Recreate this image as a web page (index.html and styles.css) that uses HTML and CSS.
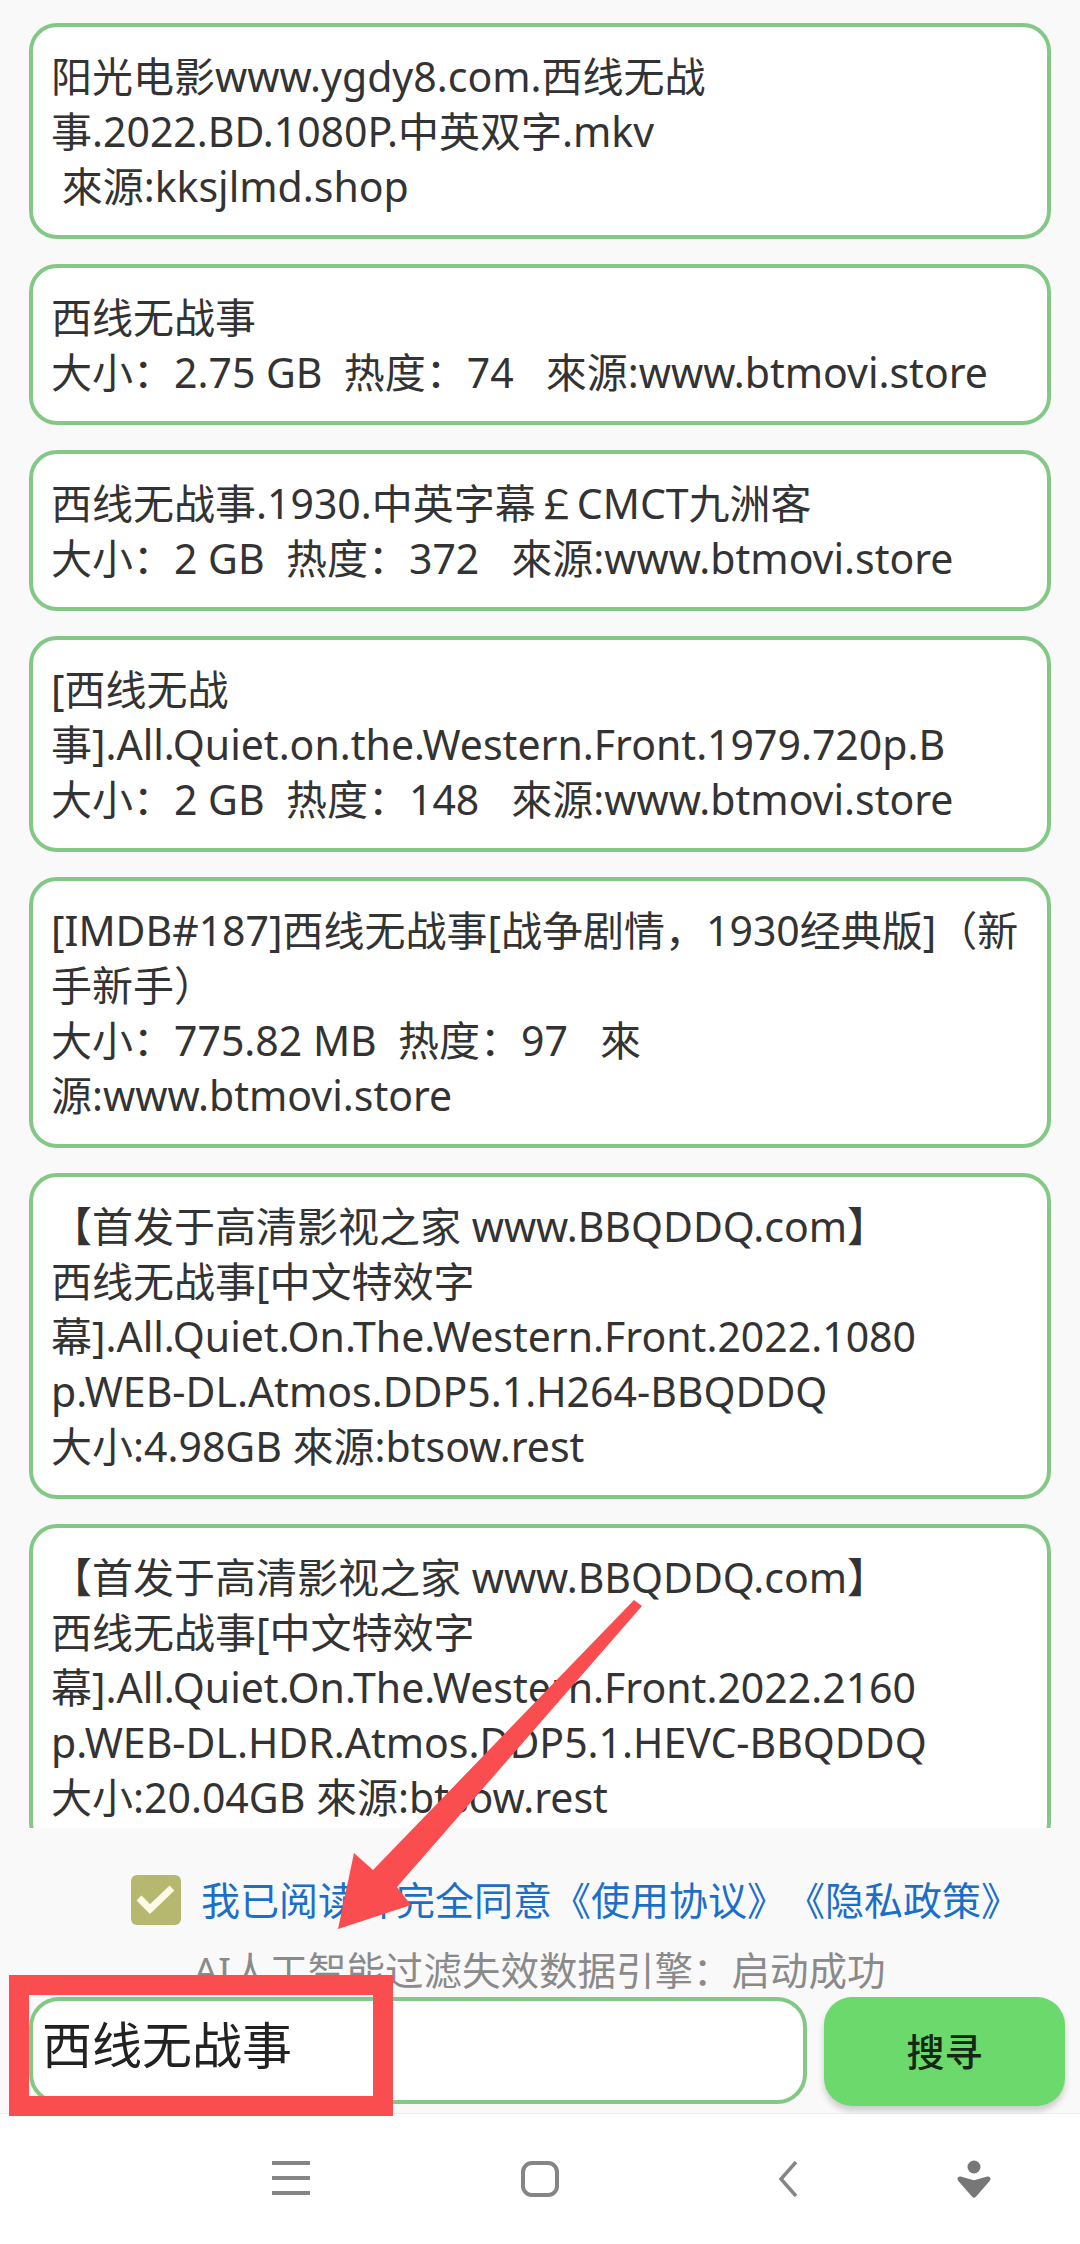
FILE: index.html
```html
<!DOCTYPE html>
<html lang="zh">
<head>
<meta charset="utf-8">
<title>西线无战事</title>
<link rel="stylesheet" href="styles.css">
</head>
<body>
<div class="screen">
  <main class="list">
    <div class="card">阳光电影www.ygdy8.com.西线无战<br>事.2022.BD.1080P.中英双字.mkv<br>&nbsp;來源:kksjlmd.shop</div>
    <div class="card">西线无战事<br>大小：2.75 GB &nbsp;热度：74 &nbsp; 來源:www.btmovi.store</div>
    <div class="card">西线无战事.1930.中英字幕￡CMCT九洲客<br>大小：2 GB &nbsp;热度：372 &nbsp; 來源:www.btmovi.store</div>
    <div class="card">[西线无战<br>事].All.Quiet.on.the.Western.Front.1979.720p.B<br>大小：2 GB &nbsp;热度：148 &nbsp; 來源:www.btmovi.store</div>
    <div class="card">[IMDB#187]西线无战事[战争剧情，1930经典版]（新<br>手新手）<br>大小：775.82 MB &nbsp;热度：97 &nbsp; 來<br>源:www.btmovi.store</div>
    <div class="card">【首发于高清影视之家 www.BBQDDQ.com】<br>西线无战事[中文特效字<br>幕].All.Quiet.On.The.Western.Front.2022.1080<br>p.WEB-DL.Atmos.DDP5.1.H264-BBQDDQ<br>大小:4.98GB 來源:btsow.rest</div>
    <div class="card">【首发于高清影视之家 www.BBQDDQ.com】<br>西线无战事[中文特效字<br>幕].All.Quiet.On.The.Western.Front.2022.2160<br>p.WEB-DL.HDR.Atmos.DDP5.1.HEVC-BBQDDQ<br>大小:20.04GB 來源:btsow.rest</div>
  </main>
  <section class="panel">
    <div class="agree">
      <span class="check"><svg viewBox="0 0 50 50" class="check-icon"><path d="M8 23 L19 34 L41 13" fill="none" stroke="#fdfbe8" stroke-width="7"/></svg></span>
      <span class="agree-text">我已阅读并完全同意《使用协议》《隐私政策》</span>
    </div>
    <div class="status">AI人工智能过滤失效数据引擎：启动成功</div>
    <div class="search">
      <div class="input">西线无战事</div>
      <button class="btn">搜寻</button>
    </div>
  </section>
  <nav class="navbar">
    <svg class="nav-icon nav-menu" viewBox="0 0 38 34"><path d="M0 2H38M0 17H38M0 32H38" stroke="#858585" stroke-width="4" fill="none"/></svg>
    <svg class="nav-icon nav-home" viewBox="0 0 38 36"><rect x="2" y="2" width="34" height="32" rx="9" stroke="#858585" stroke-width="4" fill="none"/></svg>
    <svg class="nav-icon nav-back" viewBox="0 0 20 36"><path d="M18 1 L3 18 L18 35" stroke="#858585" stroke-width="3.5" fill="none"/></svg>
    <svg class="nav-icon nav-person" viewBox="0 0 36 40"><circle cx="18" cy="7" r="6.5" fill="#777"/><path d="M4 19 L18 23 L32 19 L18 35Z" fill="#777" stroke="#777" stroke-width="5" stroke-linejoin="round"/></svg>
  </nav>
  <div class="highlight"></div>
  <svg class="arrow" viewBox="0 0 1080 2244"><path d="M634 1600 L642 1606 L397 1887 L411 1905 L338 1929 L354 1853 L373 1870Z" fill="#fa4d50"/></svg>
</div>
</body>
</html>
```
FILE: styles.css
```css
* { box-sizing: border-box; }
html, body { margin: 0; padding: 0; }
body { background: #fff; font-family: "Noto Sans", "Noto Sans CJK SC", sans-serif; text-spacing-trim: space-all; }
.screen { position: relative; width: 1080px; height: 2244px; overflow: hidden; display: flex; flex-direction: column; background: #fff; }
.list { height: 1828px; overflow: hidden; background: #f9f9f9; padding: 23px 29px 0; display: flex; flex-direction: column; gap: 25px; flex: none; }
.card { flex: none; background: #fff; border: 4px solid #84c886; border-radius: 28px; padding: 21.5px 18px; font-size: 41px; line-height: 55px; color: #333; white-space: nowrap; overflow: hidden; }
.panel { height: 286px; flex: none; background: #f9f9f9; display: flex; flex-direction: column; border-bottom: 1px solid #eee; }
.agree { display: flex; align-items: center; gap: 20px; padding: 47px 0 0 131px; height: 97px; }
.check { width: 50px; height: 50px; background: #b5b86e; border-radius: 6px; display: flex; flex: none; }
.check-icon { width: 50px; height: 50px; }
.agree-text { font-size: 39px; color: #1a6fc9; white-space: nowrap; padding-bottom: 4px; }
.status { height: 72px; padding-top: 23px; text-align: center; font-size: 38.5px; line-height: 44px; color: #8a8a8a; padding-right: 1px; white-space: nowrap; }
.search { display: flex; gap: 17px; padding: 0 15px 0 29px; height: 109px; }
.input { width: 778px; height: 107px; background: #fff; border: 4px solid #84c886; border-radius: 30px; font-size: 50px; line-height: 88px; padding-left: 9px; color: #222; }
.btn { width: 241px; height: 109px; border: 0; background: #6cd96c; border-radius: 28px; font: 500 38px "Noto Sans", "Noto Sans CJK SC", sans-serif; color: #142814; box-shadow: 0 5px 6px rgba(0,0,0,.18); padding: 0 0 4px; }
.navbar { flex: 1; position: relative; background: #fff; }
.nav-icon { position: absolute; top: 47px; }
.nav-menu { left: 272px; width: 38px; height: 34px; }
.nav-home { left: 521px; width: 38px; height: 36px; }
.nav-back { left: 778px; width: 20px; height: 36px; }
.nav-person { left: 956px; top: 46px; width: 36px; height: 40px; }
.highlight { position: absolute; left: 9px; top: 1975px; width: 384px; height: 141px; border: 20px solid #fa4d50; }
.arrow { position: absolute; left: 0; top: 0; width: 1080px; height: 2244px; pointer-events: none; }
```
